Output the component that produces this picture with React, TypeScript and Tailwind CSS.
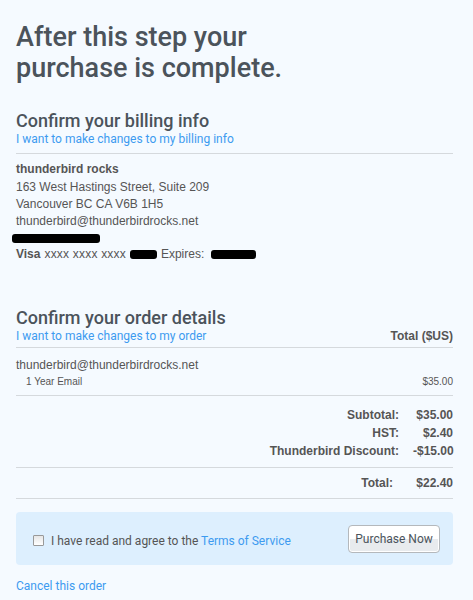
import { Fragment } from 'react';

const heading = { fontFamily: 'Roboto, "Liberation Sans", sans-serif' };
const body = { fontFamily: '"Liberation Sans", Arial, sans-serif' };

const summary = [
    { label: 'Subtotal:', value: '$35.00' },
    { label: 'HST:', value: '$2.40' },
    { label: 'Thunderbird Discount:', value: '-$15.00' },
];

function Redacted({ className }: { className: string }) {
    return <span className={`inline-block bg-black rounded-[3px] ${className}`} />;
}

export default function App() {
    return (
        <div className="min-h-[600px] w-[473px] bg-[#f5faff] text-[#555] pl-4 pr-5 pt-[22px]" style={body}>
            <h1 className="text-[27px] leading-[31px] text-[#4b535b] font-medium tracking-normal" style={heading}>
                After this step your<br />purchase is complete.
            </h1>

            {/* Billing */}
            <h2 className="mt-[26px] text-[18px] leading-[22px] text-[#4b535b] font-medium" style={heading}>
                Confirm your billing info
            </h2>
            <a className="block text-[12px] leading-[14px] text-[#3d9bf0]" style={heading}>
                I want to make changes to my billing info
            </a>
            <div className="mt-[7px] border-t border-[#d5d9dd]" />

            <div className="pt-[7px] text-[12px] leading-[17px]">
                <div className="font-bold mb-[1px]">thunderbird rocks</div>
                <div>163 West Hastings Street, Suite 209</div>
                <div>Vancouver BC CA V6B 1H5</div>
                <div>thunderbird@thunderbirdrocks.net</div>
                <div className="h-[16px] flex items-center">
                    <Redacted className="w-[88px] h-[9px] -ml-1" />
                </div>
                <div className="flex items-center">
                    <span className="font-bold">Visa</span>
                    <span className="ml-1 tracking-[0.2px]">xxxx xxxx xxxx</span>
                    <Redacted className="w-[27px] h-[9px] ml-[4px] mr-[4px]" />
                    <span>Expires:</span>
                    <Redacted className="w-[45px] h-[9px] ml-[7px]" />
                </div>
            </div>

            {/* Order */}
            <h2 className="mt-[44px] text-[18px] leading-[22px] text-[#4b535b] font-medium" style={heading}>
                Confirm your order details
            </h2>
            <div className="flex justify-between items-end text-[12px] leading-[14px]">
                <a className="text-[#3d9bf0]" style={heading}>I want to make changes to my order</a>
                <span className="font-bold">Total ($US)</span>
            </div>
            <div className="mt-[4px] border-t border-[#d5d9dd]" />

            <div className="pt-[9px] text-[12px] leading-[17px]">thunderbird@thunderbirdrocks.net</div>
            <div className="flex justify-between pl-[10px] pt-[2px] text-[10px] leading-[12px]">
                <span>1 Year Email</span>
                <span>$35.00</span>
            </div>
            <div className="mt-[7px] border-t border-[#d5d9dd]" />

            <div className="grid grid-cols-[1fr_auto] gap-x-[14px] pt-[10px] pb-[7px] text-[12px] leading-[18px] font-bold text-right">
                {summary.map((row) => (
                    <Fragment key={row.label}>
                        <span>{row.label}</span>
                        <span className="w-[40px]">{row.value}</span>
                    </Fragment>
                ))}
            </div>
            <div className="border-t border-[#d5d9dd]" />
            <div className="flex justify-end gap-[20px] py-[8px] text-[12px] leading-[14px] font-bold">
                <span>Total:</span>
                <span className="w-[40px] text-right">$22.40</span>
            </div>
            <div className="border-t border-[#d5d9dd]" />

            {/* Agreement */}
            <div className="mt-[13px] h-[53px] rounded-[4px] bg-[#ddeffe] flex items-center justify-between pl-[17px] pr-[13px]">
                <label className="flex items-center gap-[7px] text-[12px] pt-[4px]" style={heading}>
                    <span className="w-[11px] h-[11px] border border-[#999] bg-gradient-to-b from-[#e6e6e6] to-[#fff] rounded-[1px]" />
                    <span>
                        I have read and agree to the <a className="text-[#3d9bf0]">Terms of Service</a>
                    </span>
                </label>
                <button
                    className="w-[92px] h-[28px] rounded-[4px] border border-[#b4b8bc] bg-gradient-to-b from-white from-50% to-[#e8ebee] to-50% text-[12px] text-[#4b535b] shadow-[inset_0_0_0_1px_#fff]"
                    style={heading}
                >
                    Purchase Now
                </button>
            </div>

            <a className="block mt-[12px] text-[12px] text-[#3d9bf0]" style={heading}>Cancel this order</a>
        </div>
    );
}
